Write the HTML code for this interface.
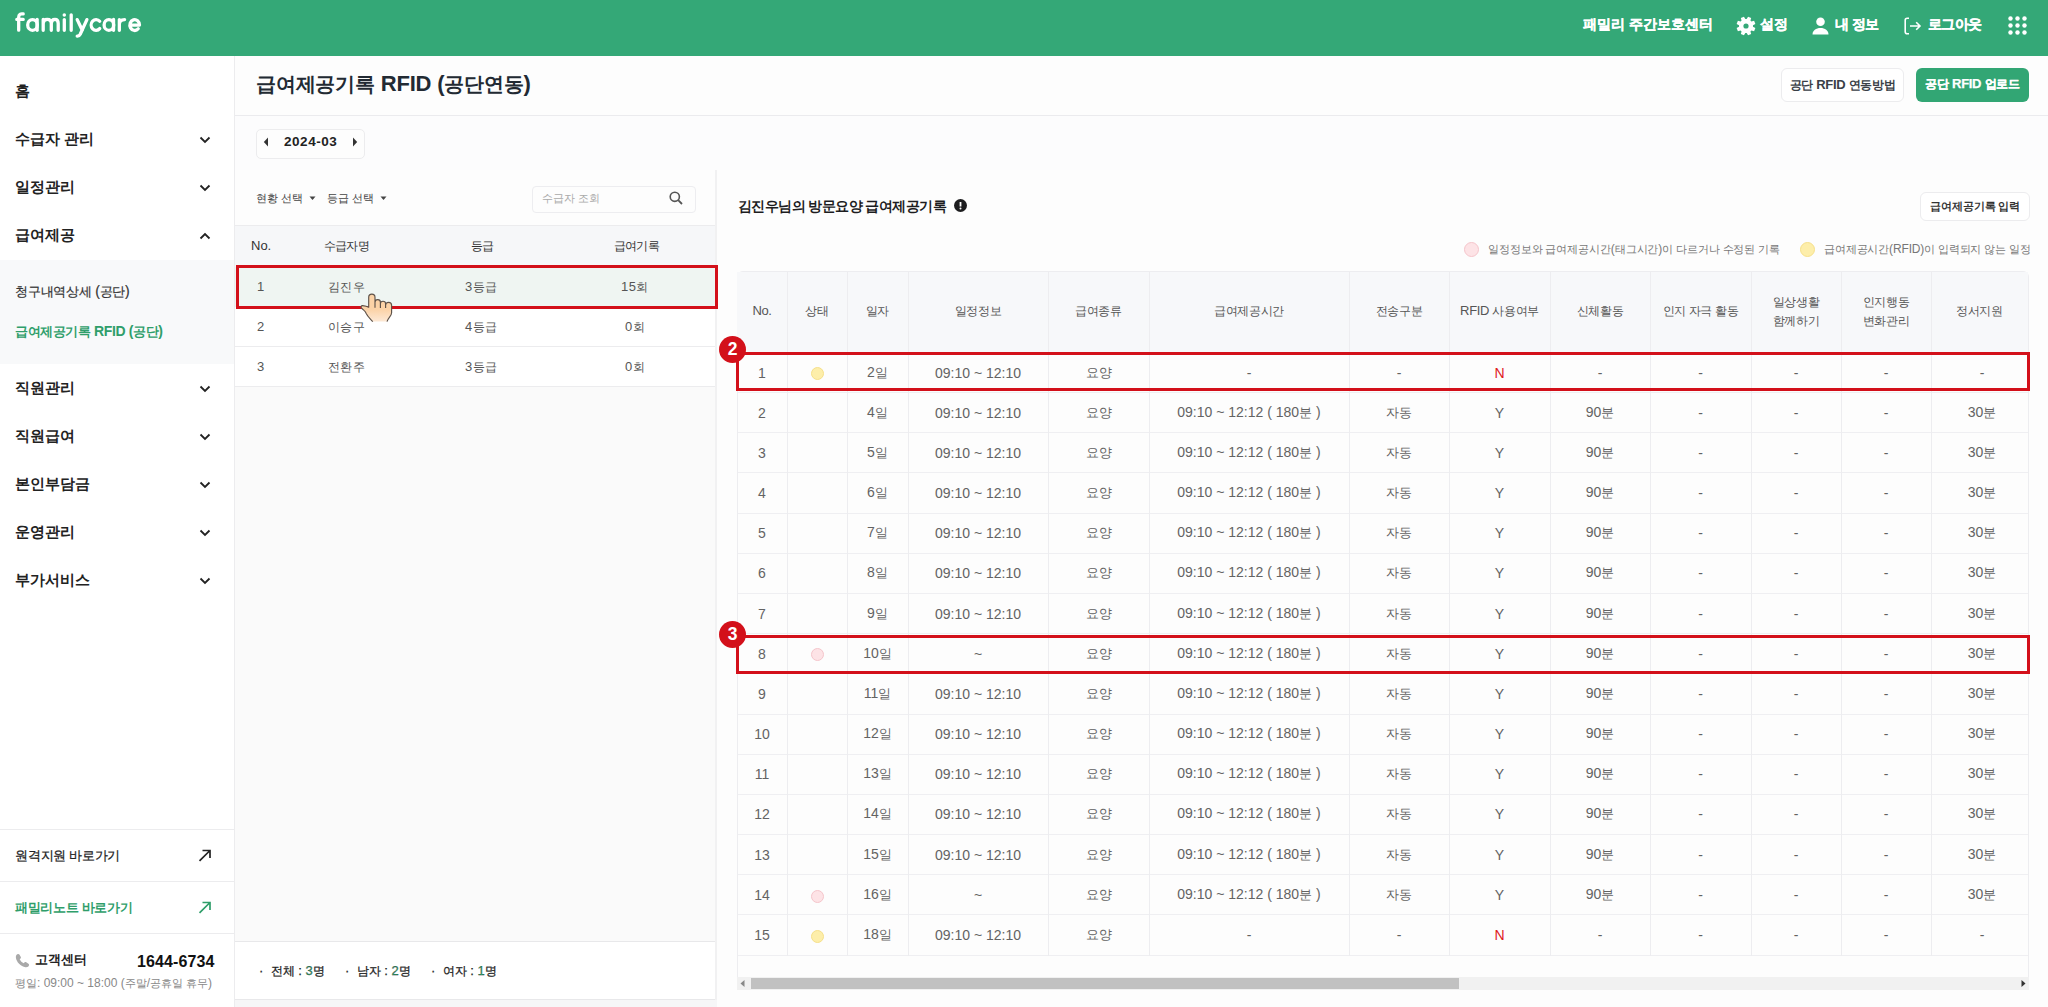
<!DOCTYPE html>
<html lang="ko"><head><meta charset="utf-8"><title>familycare</title>
<style>
*{box-sizing:border-box;margin:0;padding:0}
html,body{width:2048px;height:1007px;overflow:hidden}
body{position:relative;background:#f6f6f7;font-family:"Liberation Sans",sans-serif;color:#222}
.a{position:absolute;white-space:nowrap}
#hdr{position:absolute;left:0;top:0;width:2048px;height:56px;background:#34a877}
.logo{left:15px;top:8px;font-size:25px;font-weight:bold;color:#fff;letter-spacing:0px}
.hl{color:#fff;font-weight:bold;font-size:15px;top:15px;line-height:18px;-webkit-text-stroke:0.3px #fff}
#side{position:absolute;left:0;top:56px;width:235px;height:951px;background:#fff;border-right:1px solid #ececee}
.mi{left:15px;font-size:16px;font-weight:bold;color:#222;line-height:20px}
.chev{position:absolute;left:199px;width:12px;height:8px}
.sub{position:absolute;left:0;top:204px;width:234px;height:104px;background:#f8f9fa}
.smi{left:15px;font-size:14px;color:#333;line-height:18px}
.sl{position:absolute;left:0;width:234px;height:1px;background:#ececee}
#ttl{position:absolute;left:235px;top:56px;width:1813px;height:60px;background:#fdfdfd;border-bottom:1px solid #ebebee}
#dbar{position:absolute;left:235px;top:116px;width:1813px;height:55px;background:#fcfcfd;border-bottom:1px solid #ebebee}
.btn{position:absolute;border-radius:6px;font-size:13px;font-weight:bold;text-align:center}
#lp{position:absolute;left:235px;top:170px;width:482px;height:830px;background:#fafafa;border-right:2px solid #f1f1f2}
#rp{position:absolute;left:717px;top:170px;width:1331px;height:837px;background:#fdfdfd}
.tbl{position:absolute;left:737px;top:271px;width:1292px;height:719px;border:1px solid #ededf0;border-radius:6px 6px 0 0;background:#fdfdfd}
.th{position:absolute;top:0;height:81px;background:#f7f8fa;display:flex;align-items:center;justify-content:center;text-align:center;font-size:13px;color:#555;line-height:19px;letter-spacing:-0.35px;white-space:nowrap;border-bottom:1px solid #ebebee;padding-bottom:3px}
.tr{position:absolute;left:0;width:1290px;height:40.17px;border-bottom:1px solid #efeff2}
.td{position:absolute;height:39px;display:flex;align-items:center;justify-content:center;font-size:14px;color:#636363}
.td.red{color:#e0201e}
.vl{position:absolute;top:0;width:1px;height:684px;background:#ededf0}
.dot{display:inline-block;width:13px;height:13px;border-radius:50%;vertical-align:middle}
.td .dot{position:relative;top:0}
.dy{background:#fdeeaa;border:1px solid #f6e08a}
.dp{background:#fde3e6;border:1px solid #f5c5cb}
.rbox{position:absolute;border:3px solid #d3101a}
.badge{position:absolute;width:27px;height:27px;border-radius:50%;background:#d3101a;color:#fff;font-weight:bold;font-size:17.5px;line-height:27px;text-align:center}
.k{font-size:0.9em}
.mi .k{font-size:0.94em}

</style></head>
<body>
<div id="hdr">
  <svg class="a" style="left:0;top:0" width="160" height="56" viewBox="0 0 160 56"><g fill="none" stroke="#fff" stroke-width="3.3" stroke-linecap="round" stroke-linejoin="round"><path d="M18.7 30.2V17.2C18.7 14.2 20.4 13.5 23.2 13.9M16.8 19.4H23.2"/><ellipse cx="32.5" cy="24.95" rx="4.8" ry="5.4"/><path d="M37.15 19.5V30.3"/><path d="M43.2 30.3V19.5M43.2 23.6C43.2 20.6 45 19.4 47.2 19.4C49.6 19.4 51.3 20.8 51.3 23.6V30.3M51.3 23.6C51.3 20.6 53 19.4 55 19.4C57.2 19.4 58.2 20.8 58.2 23.6V30.3"/><path d="M64.3 19.6V30.3M71.2 14.8V30.3"/><path d="M77.2 19.6L82.3 30.3M86.9 19.6L80.2 34.2Q79.2 36.2 77.2 36.1"/><path d="M99.7 21.3A4.9 5.4 0 1 0 99.7 28.6"/><ellipse cx="108.9" cy="24.95" rx="4.8" ry="5.4"/><path d="M113.55 19.5V30.3M119.35 30.3V19.6M119.35 24.2C119.35 21.2 121.4 19.6 124.6 19.6"/><path d="M129.9 25.1H139.5A4.8 5.4 0 1 0 138.2 28.8"/></g><circle cx="64.3" cy="15.1" r="1.75" fill="#fff"/></svg>
  <div class="a hl" style="left:1583px"><span class="k">패밀리 주간보호센터</span></div>
  <svg class="a" style="left:1733.5px;top:13.8px" width="24" height="24" viewBox="0 0 24 24"><path fill="#fff" fill-rule="evenodd" d="M12.67 5.03 L14.08 2.63 L17.16 3.90 L16.45 6.60 L17.40 7.55 L20.10 6.84 L21.37 9.92 L18.97 11.33 L18.97 12.67 L21.37 14.08 L20.10 17.16 L17.40 16.45 L16.45 17.40 L17.16 20.10 L14.08 21.37 L12.67 18.97 L11.33 18.97 L9.92 21.37 L6.84 20.10 L7.55 17.40 L6.60 16.45 L3.90 17.16 L2.63 14.08 L5.03 12.67 L5.03 11.33 L2.63 9.92 L3.90 6.84 L6.60 7.55 L7.55 6.60 L6.84 3.90 L9.92 2.63 L11.33 5.03Z M14.6 12 A2.6 2.6 0 1 0 9.4 12 A2.6 2.6 0 1 0 14.6 12Z"/></svg>
  <div class="a hl" style="left:1760px"><span class="k">설정</span></div>
  <svg class="a" style="left:1812px;top:17px" width="17" height="18" viewBox="0 0 17 18"><circle cx="8.5" cy="4.8" r="4.3" fill="#fff"/><path d="M0.5 17.5c0-4 3.5-6.5 8-6.5s8 2.5 8 6.5z" fill="#fff"/></svg>
  <div class="a hl" style="left:1835px;letter-spacing:-0.5px"><span class="k">내 정보</span></div>
  <svg class="a" style="left:1904px;top:17px" width="18" height="18" viewBox="0 0 18 18"><path d="M5 1.2H3.2Q1.2 1.2 1.2 3.2V14.8Q1.2 16.8 3.2 16.8H5" fill="none" stroke="#fff" stroke-width="1.6"/><path d="M6 9H16M12.2 5.2L16 9L12.2 12.8" fill="none" stroke="#fff" stroke-width="1.6"/></svg>
  <div class="a hl" style="left:1928px;letter-spacing:-0.6px"><span class="k">로그아웃</span></div>
  <svg class="a" style="left:2008px;top:16px" width="20" height="20" viewBox="0 0 20 20"><g fill="#fff"><circle cx="2.5" cy="2.5" r="2.2"/><circle cx="9.5" cy="2.5" r="2.2"/><circle cx="16.5" cy="2.5" r="2.2"/><circle cx="2.5" cy="9.5" r="2.2"/><circle cx="9.5" cy="9.5" r="2.2"/><circle cx="16.5" cy="9.5" r="2.2"/><circle cx="2.5" cy="16.5" r="2.2"/><circle cx="9.5" cy="16.5" r="2.2"/><circle cx="16.5" cy="16.5" r="2.2"/></g></svg>
</div>

<div id="side">
  <div class="a mi" style="top:25px"><span class="k">홈</span></div>
  <div class="a mi" style="top:73px"><span class="k">수급자 관리</span></div>
  <svg class="chev" style="top:80px" viewBox="0 0 12 8"><path d="M1.5 1.5L6 6L10.5 1.5" fill="none" stroke="#222" stroke-width="1.8"/></svg>
  <div class="a mi" style="top:121px"><span class="k">일정관리</span></div>
  <svg class="chev" style="top:128px" viewBox="0 0 12 8"><path d="M1.5 1.5L6 6L10.5 1.5" fill="none" stroke="#222" stroke-width="1.8"/></svg>
  <div class="a mi" style="top:169px"><span class="k">급여제공</span></div>
  <svg class="chev" style="top:176px" viewBox="0 0 12 8"><path d="M1.5 6.5L6 2L10.5 6.5" fill="none" stroke="#222" stroke-width="1.8"/></svg>
  <div class="sub"></div>
  <div class="a smi" style="top:226px;letter-spacing:-0.25px;-webkit-text-stroke:0.2px #333"><span class="k">청구내역상세</span> (<span class="k">공단</span>)</div>
  <div class="a smi" style="top:266px;color:#2f9e6a;font-weight:bold;letter-spacing:-0.4px"><span class="k">급여제공기록</span> RFID (<span class="k">공단</span>)</div>
  <div class="a mi" style="top:322px"><span class="k">직원관리</span></div>
  <svg class="chev" style="top:329px" viewBox="0 0 12 8"><path d="M1.5 1.5L6 6L10.5 1.5" fill="none" stroke="#222" stroke-width="1.8"/></svg>
  <div class="a mi" style="top:370px"><span class="k">직원급여</span></div>
  <svg class="chev" style="top:377px" viewBox="0 0 12 8"><path d="M1.5 1.5L6 6L10.5 1.5" fill="none" stroke="#222" stroke-width="1.8"/></svg>
  <div class="a mi" style="top:418px"><span class="k">본인부담금</span></div>
  <svg class="chev" style="top:425px" viewBox="0 0 12 8"><path d="M1.5 1.5L6 6L10.5 1.5" fill="none" stroke="#222" stroke-width="1.8"/></svg>
  <div class="a mi" style="top:466px"><span class="k">운영관리</span></div>
  <svg class="chev" style="top:473px" viewBox="0 0 12 8"><path d="M1.5 1.5L6 6L10.5 1.5" fill="none" stroke="#222" stroke-width="1.8"/></svg>
  <div class="a mi" style="top:514px"><span class="k">부가서비스</span></div>
  <svg class="chev" style="top:521px" viewBox="0 0 12 8"><path d="M1.5 1.5L6 6L10.5 1.5" fill="none" stroke="#222" stroke-width="1.8"/></svg>

  <div class="sl" style="top:773px"></div>
  <div class="a smi" style="top:790px;color:#222;letter-spacing:-0.25px;-webkit-text-stroke:0.25px #222"><span class="k">원격지원 바로가기</span></div>
  <svg class="a" style="left:198px;top:793px" width="14" height="13" viewBox="0 0 14 13"><path d="M1.5 11.8L12 1.5M4.5 1.5H12V9" fill="none" stroke="#222" stroke-width="1.7"/></svg>
  <div class="sl" style="top:825px"></div>
  <div class="a smi" style="top:842px;color:#2f9e6a;font-weight:bold;letter-spacing:-0.3px"><span class="k">패밀리노트 바로가기</span></div>
  <svg class="a" style="left:198px;top:845px" width="14" height="13" viewBox="0 0 14 13"><path d="M1.5 11.8L12 1.5M4.5 1.5H12V9" fill="none" stroke="#2f9e6a" stroke-width="1.7"/></svg>
  <div class="sl" style="top:877px"></div>
  <svg class="a" style="left:14.8px;top:896.6px" width="15" height="15" viewBox="0 0 14 14"><path fill="#a9a9a9" d="M3.1 0.9C1.6 1 0.6 2.2 0.8 4.3C1.3 8.5 5.4 12.8 9.8 13.2C11.6 13.4 12.8 12.6 13.1 11.4C13.3 10.8 13 10.3 12.5 10L10.5 8.7C9.9 8.3 9.2 8.4 8.8 8.9L8.2 9.6C6.5 8.8 5.2 7.5 4.4 5.8L5.1 5.2C5.6 4.8 5.7 4.1 5.3 3.5L4.1 1.4C3.9 1.1 3.5 0.9 3.1 0.9Z"/></svg>
  <div class="a smi" style="top:894px;left:35px;color:#222;font-weight:bold"><span class="k">고객센터</span></div>
  <div class="a" style="top:896.5px;left:137px;font-size:16px;font-weight:bold;color:#111;letter-spacing:0.1px">1644-6734</div>
  <div class="a" style="top:920px;left:15px;font-size:12px;color:#888"><span class="k">평일</span>: 09:00 ~ 18:00 (<span class="k">주말</span>/<span class="k">공휴일 휴무</span>)</div>
</div>

<div id="ttl">
  <div class="a" style="left:21px;top:15px;font-size:22px;font-weight:bold;color:#222a33;letter-spacing:-0.2px"><span class="k">급여제공기록</span> RFID (<span class="k">공단연동</span>)</div>
  <div class="btn" style="left:1546px;top:12px;width:123px;height:34px;background:#fff;border:1px solid #ececee;color:#3a3f47;line-height:32px;letter-spacing:-0.3px"><span class="k">공단</span> RFID <span class="k">연동방법</span></div>
  <div class="btn" style="left:1681px;top:12px;width:113px;height:34px;background:#32a674;color:#fff;line-height:31px;-webkit-text-stroke:0.25px #fff;letter-spacing:-0.3px"><span class="k">공단</span> RFID <span class="k">업로드</span></div>
</div>

<div id="dbar">
  <div class="a" style="left:21px;top:13px;width:109px;height:30px;border:1px solid #ececee;border-radius:5px;background:#fdfdfd"></div>
  <svg class="a" style="left:28px;top:21px" width="6" height="10" viewBox="0 0 6 10"><path d="M5 0.5V9.5L0.8 5z" fill="#333"/></svg>
  <div class="a" style="left:49px;top:17.5px;font-size:13.5px;font-weight:bold;color:#222;letter-spacing:0.55px">2024-03</div>
  <svg class="a" style="left:117px;top:21px" width="6" height="10" viewBox="0 0 6 10"><path d="M1 0.5V9.5L5.2 5z" fill="#333"/></svg>
</div>

<div id="lp">
  <div class="a" style="left:0;top:0;width:480px;height:56px;background:#fdfdfd;border-bottom:1px solid #ececee"></div>
  <div class="a" style="left:21px;top:20.5px;font-size:12px;color:#444"><span class="k">현황 선택</span></div>
  <svg class="a" style="left:74px;top:26px" width="7" height="5" viewBox="0 0 7 5"><path d="M0.5 0.5H6.5L3.5 4z" fill="#444"/></svg>
  <div class="a" style="left:92px;top:20.5px;font-size:12px;color:#444"><span class="k">등급 선택</span></div>
  <svg class="a" style="left:145px;top:26px" width="7" height="5" viewBox="0 0 7 5"><path d="M0.5 0.5H6.5L3.5 4z" fill="#444"/></svg>
  <div class="a" style="left:297px;top:16px;width:164px;height:27px;border:1px solid #ededf0;border-radius:4px;background:#fdfdfd"></div>
  <div class="a" style="left:307px;top:21px;font-size:12px;color:#aaa"><span class="k">수급자 조회</span></div>
  <svg class="a" style="left:434px;top:21px" width="14" height="14" viewBox="0 0 14 14"><circle cx="5.8" cy="5.8" r="4.6" fill="none" stroke="#555" stroke-width="1.6"/><path d="M9.2 9.2L13 13" stroke="#555" stroke-width="1.8"/></svg>

  <div class="a" style="left:0;top:56px;width:480px;height:41px;background:#f6f7f9"></div>
  <div class="a lh" style="left:16px;top:68px;font-size:13px;color:#333">No.</div>
  <div class="a lh" style="letter-spacing:-0.8px;left:89px;top:68px;font-size:13px;color:#333"><span class="k">수급자명</span></div>
  <div class="a lh" style="letter-spacing:-0.8px;left:236px;top:68px;font-size:13px;color:#333"><span class="k">등급</span></div>
  <div class="a lh" style="letter-spacing:-0.8px;left:379px;top:68px;font-size:13px;color:#333"><span class="k">급여기록</span></div>

  <div class="a" style="left:0;top:97px;width:480px;height:40px;background:#eff5f2"></div>
  <div class="a" style="left:0;top:137px;width:480px;height:80px;background:#fff"></div>
  <div class="a" style="left:0;top:176px;width:480px;height:1px;background:#ececee"></div>
  <div class="a" style="left:0;top:216px;width:480px;height:1px;background:#ececee"></div>
  <div class="a lt" style="letter-spacing:0.4px;left:22px;top:109px;font-size:13px;color:#555">1</div>
  <div class="a lt" style="letter-spacing:0.4px;left:93px;top:109px;font-size:13px;color:#555"><span class="k">김진우</span></div>
  <div class="a lt" style="letter-spacing:0.4px;left:230px;top:109px;font-size:13px;color:#555">3<span class="k">등급</span></div>
  <div class="a lt" style="letter-spacing:0.4px;left:386px;top:109px;font-size:13px;color:#555">15<span class="k">회</span></div>
  <div class="a lt" style="letter-spacing:0.4px;left:22px;top:149px;font-size:13px;color:#555">2</div>
  <div class="a lt" style="letter-spacing:0.4px;left:93px;top:149px;font-size:13px;color:#555"><span class="k">이승구</span></div>
  <div class="a lt" style="letter-spacing:0.4px;left:230px;top:149px;font-size:13px;color:#555">4<span class="k">등급</span></div>
  <div class="a lt" style="letter-spacing:0.4px;left:390px;top:149px;font-size:13px;color:#555">0<span class="k">회</span></div>
  <div class="a lt" style="letter-spacing:0.4px;left:22px;top:189px;font-size:13px;color:#555">3</div>
  <div class="a lt" style="letter-spacing:0.4px;left:93px;top:189px;font-size:13px;color:#555"><span class="k">전환주</span></div>
  <div class="a lt" style="letter-spacing:0.4px;left:230px;top:189px;font-size:13px;color:#555">3<span class="k">등급</span></div>
  <div class="a lt" style="letter-spacing:0.4px;left:390px;top:189px;font-size:13px;color:#555">0<span class="k">회</span></div>

  <div class="a" style="left:0;top:771px;width:480px;height:59px;background:#fff;border-top:1px solid #e8e8ea;border-bottom:1px solid #e8e8ea"></div>
  <div class="a" style="left:24px;top:793px;font-size:13px;color:#222;-webkit-text-stroke:0.25px #222">· &nbsp;<span class="k">전체</span> : <span style="color:#2f9e6a">3</span><span class="k">명</span></div>
  <div class="a" style="left:110px;top:793px;font-size:13px;color:#222;-webkit-text-stroke:0.25px #222">· &nbsp;<span class="k">남자</span> : <span style="color:#2f9e6a">2</span><span class="k">명</span></div>
  <div class="a" style="left:196px;top:793px;font-size:13px;color:#222;-webkit-text-stroke:0.25px #222">· &nbsp;<span class="k">여자</span> : <span style="color:#2f9e6a">1</span><span class="k">명</span></div>
</div>

<div id="rp">
  <div class="a" style="left:21px;top:27px;font-size:15px;font-weight:bold;color:#1d1d1f;letter-spacing:-0.55px"><span class="k">김진우님의 방문요양 급여제공기록</span></div>
  <svg class="a" style="left:237px;top:29px" width="13" height="13" viewBox="0 0 13 13"><circle cx="6.5" cy="6.5" r="6.5" fill="#1d1d1f"/><path d="M6.5 3V7.5" stroke="#fff" stroke-width="1.8"/><circle cx="6.5" cy="9.6" r="1" fill="#fff"/></svg>
  <div class="btn" style="left:1203px;top:22px;width:110px;height:29px;background:#fff;border:1px solid #ececee;color:#333;font-size:12px;line-height:27px"><span class="k">급여제공기록 입력</span></div>
  <span class="a dot dp" style="left:747px;top:72px;width:15px;height:15px"></span>
  <div class="a" style="left:771px;top:72px;font-size:12px;color:#777;letter-spacing:-0.1px"><span class="k">일정정보와 급여제공시간</span>(<span class="k">태그시간</span>)<span class="k">이 다르거나 수정된 기록</span></div>
  <span class="a dot dy" style="left:1083px;top:72px;width:15px;height:15px"></span>
  <div class="a" style="left:1107px;top:72px;font-size:12px;color:#777;letter-spacing:-0.15px"><span class="k">급여제공시간</span>(RFID)<span class="k">이 입력되지 않는 일정</span></div>
</div>

<div class="tbl">
<div class="th" style="left:-1px;width:50px"><div>No.</div></div>
<div class="th" style="left:49px;width:60px"><div><span class="k">상태</span></div></div>
<div class="th" style="left:109px;width:61px"><div><span class="k">일자</span></div></div>
<div class="th" style="left:170px;width:140px"><div><span class="k">일정정보</span></div></div>
<div class="th" style="left:310px;width:101px"><div><span class="k">급여종류</span></div></div>
<div class="th" style="left:411px;width:200px"><div><span class="k">급여제공시간</span></div></div>
<div class="th" style="left:611px;width:100px"><div><span class="k">전송구분</span></div></div>
<div class="th" style="left:711px;width:101px"><div>RFID <span class="k">사용여부</span></div></div>
<div class="th" style="left:812px;width:100px"><div><span class="k">신체활동</span></div></div>
<div class="th" style="left:912px;width:101px"><div><span class="k">인지 자극 활동</span></div></div>
<div class="th" style="left:1013px;width:90px"><div><span class="k">일상생활</span><br><span class="k">함께하기</span></div></div>
<div class="th" style="left:1103px;width:90px"><div><span class="k">인지행동</span><br><span class="k">변화관리</span></div></div>
<div class="th" style="left:1193px;width:97px"><div><span class="k">정서지원</span></div></div>
<div class="tr" style="top:81.00px"></div>
<div class="td" style="left:-1px;top:81.00px;width:50px"><span>1</span></div>
<div class="td" style="left:49px;top:81.00px;width:60px"><span><span class="dot dy"></span></span></div>
<div class="td" style="left:109px;top:81.00px;width:61px"><span>2<span class="k">일</span></span></div>
<div class="td" style="left:170px;top:81.00px;width:140px"><span>09:10 ~ 12:10</span></div>
<div class="td" style="left:310px;top:81.00px;width:101px"><span><span class="k">요양</span></span></div>
<div class="td" style="left:411px;top:81.00px;width:200px"><span>-</span></div>
<div class="td" style="left:611px;top:81.00px;width:100px"><span>-</span></div>
<div class="td red" style="left:711px;top:81.00px;width:101px"><span>N</span></div>
<div class="td" style="left:812px;top:81.00px;width:100px"><span>-</span></div>
<div class="td" style="left:912px;top:81.00px;width:101px"><span>-</span></div>
<div class="td" style="left:1013px;top:81.00px;width:90px"><span>-</span></div>
<div class="td" style="left:1103px;top:81.00px;width:90px"><span>-</span></div>
<div class="td" style="left:1195px;top:81.00px;width:98px"><span>-</span></div>
<div class="tr" style="top:121.17px"></div>
<div class="td" style="left:-1px;top:121.17px;width:50px"><span>2</span></div>
<div class="td" style="left:49px;top:121.17px;width:60px"><span></span></div>
<div class="td" style="left:109px;top:121.17px;width:61px"><span>4<span class="k">일</span></span></div>
<div class="td" style="left:170px;top:121.17px;width:140px"><span>09:10 ~ 12:10</span></div>
<div class="td" style="left:310px;top:121.17px;width:101px"><span><span class="k">요양</span></span></div>
<div class="td" style="left:411px;top:121.17px;width:200px"><span>09:10 ~ 12:12 ( 180<span class="k">분</span> )</span></div>
<div class="td" style="left:611px;top:121.17px;width:100px"><span><span class="k">자동</span></span></div>
<div class="td" style="left:711px;top:121.17px;width:101px"><span>Y</span></div>
<div class="td" style="left:812px;top:121.17px;width:100px"><span>90<span class="k">분</span></span></div>
<div class="td" style="left:912px;top:121.17px;width:101px"><span>-</span></div>
<div class="td" style="left:1013px;top:121.17px;width:90px"><span>-</span></div>
<div class="td" style="left:1103px;top:121.17px;width:90px"><span>-</span></div>
<div class="td" style="left:1195px;top:121.17px;width:98px"><span>30<span class="k">분</span></span></div>
<div class="tr" style="top:161.34px"></div>
<div class="td" style="left:-1px;top:161.34px;width:50px"><span>3</span></div>
<div class="td" style="left:49px;top:161.34px;width:60px"><span></span></div>
<div class="td" style="left:109px;top:161.34px;width:61px"><span>5<span class="k">일</span></span></div>
<div class="td" style="left:170px;top:161.34px;width:140px"><span>09:10 ~ 12:10</span></div>
<div class="td" style="left:310px;top:161.34px;width:101px"><span><span class="k">요양</span></span></div>
<div class="td" style="left:411px;top:161.34px;width:200px"><span>09:10 ~ 12:12 ( 180<span class="k">분</span> )</span></div>
<div class="td" style="left:611px;top:161.34px;width:100px"><span><span class="k">자동</span></span></div>
<div class="td" style="left:711px;top:161.34px;width:101px"><span>Y</span></div>
<div class="td" style="left:812px;top:161.34px;width:100px"><span>90<span class="k">분</span></span></div>
<div class="td" style="left:912px;top:161.34px;width:101px"><span>-</span></div>
<div class="td" style="left:1013px;top:161.34px;width:90px"><span>-</span></div>
<div class="td" style="left:1103px;top:161.34px;width:90px"><span>-</span></div>
<div class="td" style="left:1195px;top:161.34px;width:98px"><span>30<span class="k">분</span></span></div>
<div class="tr" style="top:201.51px"></div>
<div class="td" style="left:-1px;top:201.51px;width:50px"><span>4</span></div>
<div class="td" style="left:49px;top:201.51px;width:60px"><span></span></div>
<div class="td" style="left:109px;top:201.51px;width:61px"><span>6<span class="k">일</span></span></div>
<div class="td" style="left:170px;top:201.51px;width:140px"><span>09:10 ~ 12:10</span></div>
<div class="td" style="left:310px;top:201.51px;width:101px"><span><span class="k">요양</span></span></div>
<div class="td" style="left:411px;top:201.51px;width:200px"><span>09:10 ~ 12:12 ( 180<span class="k">분</span> )</span></div>
<div class="td" style="left:611px;top:201.51px;width:100px"><span><span class="k">자동</span></span></div>
<div class="td" style="left:711px;top:201.51px;width:101px"><span>Y</span></div>
<div class="td" style="left:812px;top:201.51px;width:100px"><span>90<span class="k">분</span></span></div>
<div class="td" style="left:912px;top:201.51px;width:101px"><span>-</span></div>
<div class="td" style="left:1013px;top:201.51px;width:90px"><span>-</span></div>
<div class="td" style="left:1103px;top:201.51px;width:90px"><span>-</span></div>
<div class="td" style="left:1195px;top:201.51px;width:98px"><span>30<span class="k">분</span></span></div>
<div class="tr" style="top:241.68px"></div>
<div class="td" style="left:-1px;top:241.68px;width:50px"><span>5</span></div>
<div class="td" style="left:49px;top:241.68px;width:60px"><span></span></div>
<div class="td" style="left:109px;top:241.68px;width:61px"><span>7<span class="k">일</span></span></div>
<div class="td" style="left:170px;top:241.68px;width:140px"><span>09:10 ~ 12:10</span></div>
<div class="td" style="left:310px;top:241.68px;width:101px"><span><span class="k">요양</span></span></div>
<div class="td" style="left:411px;top:241.68px;width:200px"><span>09:10 ~ 12:12 ( 180<span class="k">분</span> )</span></div>
<div class="td" style="left:611px;top:241.68px;width:100px"><span><span class="k">자동</span></span></div>
<div class="td" style="left:711px;top:241.68px;width:101px"><span>Y</span></div>
<div class="td" style="left:812px;top:241.68px;width:100px"><span>90<span class="k">분</span></span></div>
<div class="td" style="left:912px;top:241.68px;width:101px"><span>-</span></div>
<div class="td" style="left:1013px;top:241.68px;width:90px"><span>-</span></div>
<div class="td" style="left:1103px;top:241.68px;width:90px"><span>-</span></div>
<div class="td" style="left:1195px;top:241.68px;width:98px"><span>30<span class="k">분</span></span></div>
<div class="tr" style="top:281.85px"></div>
<div class="td" style="left:-1px;top:281.85px;width:50px"><span>6</span></div>
<div class="td" style="left:49px;top:281.85px;width:60px"><span></span></div>
<div class="td" style="left:109px;top:281.85px;width:61px"><span>8<span class="k">일</span></span></div>
<div class="td" style="left:170px;top:281.85px;width:140px"><span>09:10 ~ 12:10</span></div>
<div class="td" style="left:310px;top:281.85px;width:101px"><span><span class="k">요양</span></span></div>
<div class="td" style="left:411px;top:281.85px;width:200px"><span>09:10 ~ 12:12 ( 180<span class="k">분</span> )</span></div>
<div class="td" style="left:611px;top:281.85px;width:100px"><span><span class="k">자동</span></span></div>
<div class="td" style="left:711px;top:281.85px;width:101px"><span>Y</span></div>
<div class="td" style="left:812px;top:281.85px;width:100px"><span>90<span class="k">분</span></span></div>
<div class="td" style="left:912px;top:281.85px;width:101px"><span>-</span></div>
<div class="td" style="left:1013px;top:281.85px;width:90px"><span>-</span></div>
<div class="td" style="left:1103px;top:281.85px;width:90px"><span>-</span></div>
<div class="td" style="left:1195px;top:281.85px;width:98px"><span>30<span class="k">분</span></span></div>
<div class="tr" style="top:322.02px"></div>
<div class="td" style="left:-1px;top:322.02px;width:50px"><span>7</span></div>
<div class="td" style="left:49px;top:322.02px;width:60px"><span></span></div>
<div class="td" style="left:109px;top:322.02px;width:61px"><span>9<span class="k">일</span></span></div>
<div class="td" style="left:170px;top:322.02px;width:140px"><span>09:10 ~ 12:10</span></div>
<div class="td" style="left:310px;top:322.02px;width:101px"><span><span class="k">요양</span></span></div>
<div class="td" style="left:411px;top:322.02px;width:200px"><span>09:10 ~ 12:12 ( 180<span class="k">분</span> )</span></div>
<div class="td" style="left:611px;top:322.02px;width:100px"><span><span class="k">자동</span></span></div>
<div class="td" style="left:711px;top:322.02px;width:101px"><span>Y</span></div>
<div class="td" style="left:812px;top:322.02px;width:100px"><span>90<span class="k">분</span></span></div>
<div class="td" style="left:912px;top:322.02px;width:101px"><span>-</span></div>
<div class="td" style="left:1013px;top:322.02px;width:90px"><span>-</span></div>
<div class="td" style="left:1103px;top:322.02px;width:90px"><span>-</span></div>
<div class="td" style="left:1195px;top:322.02px;width:98px"><span>30<span class="k">분</span></span></div>
<div class="tr" style="top:362.19px"></div>
<div class="td" style="left:-1px;top:362.19px;width:50px"><span>8</span></div>
<div class="td" style="left:49px;top:362.19px;width:60px"><span><span class="dot dp"></span></span></div>
<div class="td" style="left:109px;top:362.19px;width:61px"><span>10<span class="k">일</span></span></div>
<div class="td" style="left:170px;top:362.19px;width:140px"><span>~</span></div>
<div class="td" style="left:310px;top:362.19px;width:101px"><span><span class="k">요양</span></span></div>
<div class="td" style="left:411px;top:362.19px;width:200px"><span>09:10 ~ 12:12 ( 180<span class="k">분</span> )</span></div>
<div class="td" style="left:611px;top:362.19px;width:100px"><span><span class="k">자동</span></span></div>
<div class="td" style="left:711px;top:362.19px;width:101px"><span>Y</span></div>
<div class="td" style="left:812px;top:362.19px;width:100px"><span>90<span class="k">분</span></span></div>
<div class="td" style="left:912px;top:362.19px;width:101px"><span>-</span></div>
<div class="td" style="left:1013px;top:362.19px;width:90px"><span>-</span></div>
<div class="td" style="left:1103px;top:362.19px;width:90px"><span>-</span></div>
<div class="td" style="left:1195px;top:362.19px;width:98px"><span>30<span class="k">분</span></span></div>
<div class="tr" style="top:402.36px"></div>
<div class="td" style="left:-1px;top:402.36px;width:50px"><span>9</span></div>
<div class="td" style="left:49px;top:402.36px;width:60px"><span></span></div>
<div class="td" style="left:109px;top:402.36px;width:61px"><span>11<span class="k">일</span></span></div>
<div class="td" style="left:170px;top:402.36px;width:140px"><span>09:10 ~ 12:10</span></div>
<div class="td" style="left:310px;top:402.36px;width:101px"><span><span class="k">요양</span></span></div>
<div class="td" style="left:411px;top:402.36px;width:200px"><span>09:10 ~ 12:12 ( 180<span class="k">분</span> )</span></div>
<div class="td" style="left:611px;top:402.36px;width:100px"><span><span class="k">자동</span></span></div>
<div class="td" style="left:711px;top:402.36px;width:101px"><span>Y</span></div>
<div class="td" style="left:812px;top:402.36px;width:100px"><span>90<span class="k">분</span></span></div>
<div class="td" style="left:912px;top:402.36px;width:101px"><span>-</span></div>
<div class="td" style="left:1013px;top:402.36px;width:90px"><span>-</span></div>
<div class="td" style="left:1103px;top:402.36px;width:90px"><span>-</span></div>
<div class="td" style="left:1195px;top:402.36px;width:98px"><span>30<span class="k">분</span></span></div>
<div class="tr" style="top:442.53px"></div>
<div class="td" style="left:-1px;top:442.53px;width:50px"><span>10</span></div>
<div class="td" style="left:49px;top:442.53px;width:60px"><span></span></div>
<div class="td" style="left:109px;top:442.53px;width:61px"><span>12<span class="k">일</span></span></div>
<div class="td" style="left:170px;top:442.53px;width:140px"><span>09:10 ~ 12:10</span></div>
<div class="td" style="left:310px;top:442.53px;width:101px"><span><span class="k">요양</span></span></div>
<div class="td" style="left:411px;top:442.53px;width:200px"><span>09:10 ~ 12:12 ( 180<span class="k">분</span> )</span></div>
<div class="td" style="left:611px;top:442.53px;width:100px"><span><span class="k">자동</span></span></div>
<div class="td" style="left:711px;top:442.53px;width:101px"><span>Y</span></div>
<div class="td" style="left:812px;top:442.53px;width:100px"><span>90<span class="k">분</span></span></div>
<div class="td" style="left:912px;top:442.53px;width:101px"><span>-</span></div>
<div class="td" style="left:1013px;top:442.53px;width:90px"><span>-</span></div>
<div class="td" style="left:1103px;top:442.53px;width:90px"><span>-</span></div>
<div class="td" style="left:1195px;top:442.53px;width:98px"><span>30<span class="k">분</span></span></div>
<div class="tr" style="top:482.70px"></div>
<div class="td" style="left:-1px;top:482.70px;width:50px"><span>11</span></div>
<div class="td" style="left:49px;top:482.70px;width:60px"><span></span></div>
<div class="td" style="left:109px;top:482.70px;width:61px"><span>13<span class="k">일</span></span></div>
<div class="td" style="left:170px;top:482.70px;width:140px"><span>09:10 ~ 12:10</span></div>
<div class="td" style="left:310px;top:482.70px;width:101px"><span><span class="k">요양</span></span></div>
<div class="td" style="left:411px;top:482.70px;width:200px"><span>09:10 ~ 12:12 ( 180<span class="k">분</span> )</span></div>
<div class="td" style="left:611px;top:482.70px;width:100px"><span><span class="k">자동</span></span></div>
<div class="td" style="left:711px;top:482.70px;width:101px"><span>Y</span></div>
<div class="td" style="left:812px;top:482.70px;width:100px"><span>90<span class="k">분</span></span></div>
<div class="td" style="left:912px;top:482.70px;width:101px"><span>-</span></div>
<div class="td" style="left:1013px;top:482.70px;width:90px"><span>-</span></div>
<div class="td" style="left:1103px;top:482.70px;width:90px"><span>-</span></div>
<div class="td" style="left:1195px;top:482.70px;width:98px"><span>30<span class="k">분</span></span></div>
<div class="tr" style="top:522.87px"></div>
<div class="td" style="left:-1px;top:522.87px;width:50px"><span>12</span></div>
<div class="td" style="left:49px;top:522.87px;width:60px"><span></span></div>
<div class="td" style="left:109px;top:522.87px;width:61px"><span>14<span class="k">일</span></span></div>
<div class="td" style="left:170px;top:522.87px;width:140px"><span>09:10 ~ 12:10</span></div>
<div class="td" style="left:310px;top:522.87px;width:101px"><span><span class="k">요양</span></span></div>
<div class="td" style="left:411px;top:522.87px;width:200px"><span>09:10 ~ 12:12 ( 180<span class="k">분</span> )</span></div>
<div class="td" style="left:611px;top:522.87px;width:100px"><span><span class="k">자동</span></span></div>
<div class="td" style="left:711px;top:522.87px;width:101px"><span>Y</span></div>
<div class="td" style="left:812px;top:522.87px;width:100px"><span>90<span class="k">분</span></span></div>
<div class="td" style="left:912px;top:522.87px;width:101px"><span>-</span></div>
<div class="td" style="left:1013px;top:522.87px;width:90px"><span>-</span></div>
<div class="td" style="left:1103px;top:522.87px;width:90px"><span>-</span></div>
<div class="td" style="left:1195px;top:522.87px;width:98px"><span>30<span class="k">분</span></span></div>
<div class="tr" style="top:563.04px"></div>
<div class="td" style="left:-1px;top:563.04px;width:50px"><span>13</span></div>
<div class="td" style="left:49px;top:563.04px;width:60px"><span></span></div>
<div class="td" style="left:109px;top:563.04px;width:61px"><span>15<span class="k">일</span></span></div>
<div class="td" style="left:170px;top:563.04px;width:140px"><span>09:10 ~ 12:10</span></div>
<div class="td" style="left:310px;top:563.04px;width:101px"><span><span class="k">요양</span></span></div>
<div class="td" style="left:411px;top:563.04px;width:200px"><span>09:10 ~ 12:12 ( 180<span class="k">분</span> )</span></div>
<div class="td" style="left:611px;top:563.04px;width:100px"><span><span class="k">자동</span></span></div>
<div class="td" style="left:711px;top:563.04px;width:101px"><span>Y</span></div>
<div class="td" style="left:812px;top:563.04px;width:100px"><span>90<span class="k">분</span></span></div>
<div class="td" style="left:912px;top:563.04px;width:101px"><span>-</span></div>
<div class="td" style="left:1013px;top:563.04px;width:90px"><span>-</span></div>
<div class="td" style="left:1103px;top:563.04px;width:90px"><span>-</span></div>
<div class="td" style="left:1195px;top:563.04px;width:98px"><span>30<span class="k">분</span></span></div>
<div class="tr" style="top:603.21px"></div>
<div class="td" style="left:-1px;top:603.21px;width:50px"><span>14</span></div>
<div class="td" style="left:49px;top:603.21px;width:60px"><span><span class="dot dp"></span></span></div>
<div class="td" style="left:109px;top:603.21px;width:61px"><span>16<span class="k">일</span></span></div>
<div class="td" style="left:170px;top:603.21px;width:140px"><span>~</span></div>
<div class="td" style="left:310px;top:603.21px;width:101px"><span><span class="k">요양</span></span></div>
<div class="td" style="left:411px;top:603.21px;width:200px"><span>09:10 ~ 12:12 ( 180<span class="k">분</span> )</span></div>
<div class="td" style="left:611px;top:603.21px;width:100px"><span><span class="k">자동</span></span></div>
<div class="td" style="left:711px;top:603.21px;width:101px"><span>Y</span></div>
<div class="td" style="left:812px;top:603.21px;width:100px"><span>90<span class="k">분</span></span></div>
<div class="td" style="left:912px;top:603.21px;width:101px"><span>-</span></div>
<div class="td" style="left:1013px;top:603.21px;width:90px"><span>-</span></div>
<div class="td" style="left:1103px;top:603.21px;width:90px"><span>-</span></div>
<div class="td" style="left:1195px;top:603.21px;width:98px"><span>30<span class="k">분</span></span></div>
<div class="tr" style="top:643.38px"></div>
<div class="td" style="left:-1px;top:643.38px;width:50px"><span>15</span></div>
<div class="td" style="left:49px;top:643.38px;width:60px"><span><span class="dot dy"></span></span></div>
<div class="td" style="left:109px;top:643.38px;width:61px"><span>18<span class="k">일</span></span></div>
<div class="td" style="left:170px;top:643.38px;width:140px"><span>09:10 ~ 12:10</span></div>
<div class="td" style="left:310px;top:643.38px;width:101px"><span><span class="k">요양</span></span></div>
<div class="td" style="left:411px;top:643.38px;width:200px"><span>-</span></div>
<div class="td" style="left:611px;top:643.38px;width:100px"><span>-</span></div>
<div class="td red" style="left:711px;top:643.38px;width:101px"><span>N</span></div>
<div class="td" style="left:812px;top:643.38px;width:100px"><span>-</span></div>
<div class="td" style="left:912px;top:643.38px;width:101px"><span>-</span></div>
<div class="td" style="left:1013px;top:643.38px;width:90px"><span>-</span></div>
<div class="td" style="left:1103px;top:643.38px;width:90px"><span>-</span></div>
<div class="td" style="left:1195px;top:643.38px;width:98px"><span>-</span></div>
<div class="vl" style="left:49px"></div>
<div class="vl" style="left:109px"></div>
<div class="vl" style="left:170px"></div>
<div class="vl" style="left:310px"></div>
<div class="vl" style="left:411px"></div>
<div class="vl" style="left:611px"></div>
<div class="vl" style="left:711px"></div>
<div class="vl" style="left:812px"></div>
<div class="vl" style="left:912px"></div>
<div class="vl" style="left:1013px"></div>
<div class="vl" style="left:1103px"></div>
<div class="vl" style="left:1193px"></div>
</div>

<div class="a" style="left:737px;top:977px;width:1292px;height:13px;background:#f1f1f1"></div>
<div class="a" style="left:751px;top:978px;width:708px;height:11px;background:#c1c1c1"></div>
<svg class="a" style="left:740px;top:980px" width="5" height="7" viewBox="0 0 5 7"><path d="M4.5 0V7L0.5 3.5z" fill="#888"/></svg>
<svg class="a" style="left:2021px;top:980px" width="5" height="7" viewBox="0 0 5 7"><path d="M0.5 0V7L4.5 3.5z" fill="#333"/></svg>

<div class="rbox" style="left:236px;top:265px;width:482px;height:44px"></div>
<div class="rbox" style="left:736px;top:352px;width:1294px;height:39px"></div>
<div class="rbox" style="left:736px;top:635px;width:1294px;height:39px"></div>
<div class="badge" style="left:719px;top:336px">2</div>
<div class="badge" style="left:719px;top:621px">3</div>

<svg class="a" style="left:358px;top:291px" width="36" height="33" viewBox="0 0 36 33"><defs><linearGradient id="hg" x1="0" y1="0" x2="0" y2="1"><stop offset="0.55" stop-color="#fbd2a6"/><stop offset="1" stop-color="#fde9d6"/></linearGradient></defs><path d="M14.8 30.6C12.5 28 9.5 25.5 8.2 22.5C7.7 21.2 7 20.2 6 19.4L3.6 17.3C2.5 16.3 3.1 14.5 4.7 14.6C6.5 14.8 8.8 15.2 10.7 16.2L10.7 6.2A3.15 3.15 0 0 1 17 6.2L17 11.3A2.7 2.7 0 0 1 22.4 11.3L22.4 12.8A2.6 2.6 0 0 1 27.6 12.8L27.6 14.3A3 3 0 0 1 33.6 14.3L33.6 21.7C33.6 25 30 27 29 30.6Z" fill="url(#hg)"/><path d="M14.8 30.6C12.5 28 9.5 25.5 8.2 22.5C7.7 21.2 7 20.2 6 19.4L3.6 17.3C2.5 16.3 3.1 14.5 4.7 14.6C6.5 14.8 8.8 15.2 10.7 16.2L10.7 6.2A3.15 3.15 0 0 1 17 6.2L17 11.3A2.7 2.7 0 0 1 22.4 11.3L22.4 12.8A2.6 2.6 0 0 1 27.6 12.8L27.6 14.3A3 3 0 0 1 33.6 14.3L33.6 21.7C33.6 25 30 27 29 30.6M17 11.3V16.8M22.4 12.8V17M27.6 14.3V17" fill="none" stroke="#5e5249" stroke-width="1.15" stroke-linejoin="round"/></svg>

</body></html>
